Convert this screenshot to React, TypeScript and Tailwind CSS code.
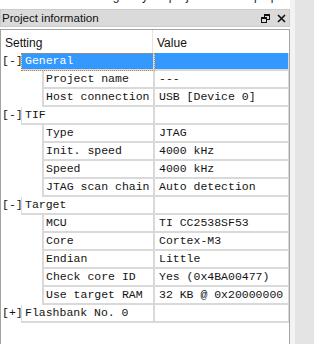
import React from 'react'

type Row =
  | { kind: 'cat'; label: string; open: boolean; selected?: boolean }
  | { kind: 'item'; label: string; value: string }

const rows: Row[] = [
  { kind: 'cat', label: 'General', open: true, selected: true },
  { kind: 'item', label: 'Project name', value: '---' },
  { kind: 'item', label: 'Host connection', value: 'USB [Device 0]' },
  { kind: 'cat', label: 'TIF', open: true },
  { kind: 'item', label: 'Type', value: 'JTAG' },
  { kind: 'item', label: 'Init. speed', value: '4000 kHz' },
  { kind: 'item', label: 'Speed', value: '4000 kHz' },
  { kind: 'item', label: 'JTAG scan chain', value: 'Auto detection' },
  { kind: 'cat', label: 'Target', open: true },
  { kind: 'item', label: 'MCU', value: 'TI CC2538SF53' },
  { kind: 'item', label: 'Core', value: 'Cortex-M3' },
  { kind: 'item', label: 'Endian', value: 'Little' },
  { kind: 'item', label: 'Check core ID', value: 'Yes (0x4BA00477)' },
  { kind: 'item', label: 'Use target RAM', value: '32 KB @ 0x20000000' },
  { kind: 'cat', label: 'Flashbank No. 0', open: false },
]

const mono = "font-['Liberation_Mono','DejaVu_Sans_Mono',monospace] text-[11.5px] leading-[16px] text-[#141414]"

const FloatIcon = () => (
  <svg width="9" height="9" viewBox="0 0 9 9" className="block">
    <rect x="3.5" y="0.5" width="5" height="5" fill="none" stroke="#111" />
    <rect x="3" y="0" width="6" height="2" fill="#111" />
    <rect x="0.5" y="3.5" width="5" height="5" fill="#dadada" stroke="#111" />
    <rect x="0" y="3" width="6" height="2" fill="#111" />
  </svg>
)

const CloseIcon = () => (
  <svg width="9" height="9" viewBox="0 0 9 9" className="block">
    <path d="M1 1 L8 8 M8 1 L1 8" stroke="#111" strokeWidth="1.6" />
  </svg>
)

const TreeRow: React.FC<{ row: Row }> = ({ row }) => {
  if (row.kind === 'cat') {
    const sel = row.selected
    return (
      <div className="flex h-[18px]">
        <div className={`w-[20px] pl-[1px] ${mono}`}>{row.open ? '[-]' : '[+]'}</div>
        <div
          className={`w-[134px] pl-[3px] border-l border-b-2 border-r-2 border-[#d9d9d9] ${mono} ${
            sel ? 'bg-[#3399ff] text-white outline-1 outline-dotted outline-[#c9853d] -outline-offset-1' : ''
          }`}
        >
          {row.label}
        </div>
        <div className={`flex-1 border-b-2 border-r border-[#d9d9d9] ${sel ? 'bg-[#3399ff]' : ''}`} />
      </div>
    )
  }
  return (
    <div className="flex h-[18px]">
      <div className="w-[41px]" />
      <div className={`w-[113px] pl-[2px] border-l-2 border-b-2 border-r-2 border-[#d9d9d9] whitespace-nowrap ${mono}`}>
        {row.label}
      </div>
      <div className={`flex-1 pl-[4px] border-b-2 border-r border-[#d9d9d9] whitespace-nowrap ${mono}`}>{row.value}</div>
    </div>
  )
}

export default function App() {
  return (
    <div className="w-[314px] h-[344px] overflow-hidden flex bg-white font-['Liberation_Sans',Arial,sans-serif]">
      <div className="w-[290px] flex flex-col">
        <div className="h-[9px] overflow-hidden">
          <div className="mt-[-11px] pl-[82px] text-[12px] leading-[14px] text-[#222] whitespace-nowrap">
            Settings of your project and setup options
          </div>
        </div>
        <div className="h-[18px] bg-[#dadada] border border-[#cbcbcb] flex items-center justify-between pl-[1px] pr-[3px]">
          <span className="text-[11.6px] text-[#111] leading-none">Project information</span>
          <div className="flex items-center gap-[7px]">
            <FloatIcon />
            <CloseIcon />
          </div>
        </div>
        <div className="h-[2px]" />
        <div className="flex-1 border-t border-l border-r border-[#a3a3a3] flex flex-col">
          <div className="h-[23px] flex text-[12px] text-[#111]">
            <div className="w-[152px] pl-[4px] pt-[4px] border-r border-[#e5e5e5]">Setting</div>
            <div className="flex-1 pl-[4px] pt-[4px]">Value</div>
          </div>
          {rows.map((r, i) => (
            <TreeRow key={i} row={r} />
          ))}
        </div>
      </div>
      <div className="w-[5px] bg-[#f3f3f3]" />
      <div className="flex-1 bg-[#e4e4e4]" />
    </div>
  )
}
